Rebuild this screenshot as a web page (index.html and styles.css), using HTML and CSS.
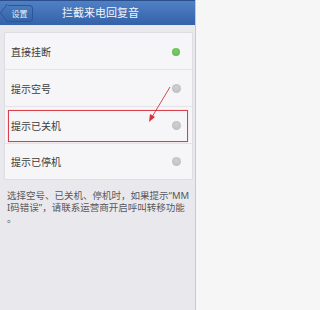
FILE: index.html
```html
<!DOCTYPE html>
<html lang="zh">
<head>
<meta charset="utf-8">
<link rel="stylesheet" href="styles.css">
</head>
<body>
<div class="frame">
  <div class="screen">
    <header class="topbar">
      <div class="back">设置</div>
      <div class="title">拦截来电回复音</div>
    </header>
    <div class="content">
      <div class="card">
        <div class="row"><span class="label">直接挂断</span><span class="dot on"></span></div>
        <div class="row"><span class="label">提示空号</span><span class="dot"></span></div>
        <div class="row marked"><span class="label">提示已关机</span><span class="dot"></span>
          <div class="mark"></div>
          <svg class="arrow" width="30" height="42" viewBox="0 0 30 42">
            <line x1="25" y1="3" x2="7" y2="33" stroke="#d8313c" stroke-width="0.9"/>
            <polygon points="4,38 5,30 10,33" fill="#d8313c"/>
          </svg>
        </div>
        <div class="row last"><span class="label">提示已停机</span><span class="dot"></span></div>
      </div>
      <p class="note">选择空号、已关机、停机时，如果提示“MMI码错误”，请联系运营商开启呼叫转移功能。</p>
    </div>
  </div>
  <div class="edge"></div>
</div>
</body>
</html>
```
FILE: styles.css
```css
html, body {
  margin: 0;
  padding: 0;
  background: #f6f6f6;
}
body {
  width: 202px;
  height: 310px;
  overflow: hidden;
  font-family: "Noto Sans CJK SC", "Noto Sans", sans-serif;
}
.frame {
  display: flex;
  height: 310px;
}
.screen {
  width: 195px;
  border-right: 1px solid #c9c9cc;
  background: #e9e9ed;
  display: flex;
  flex-direction: column;
}
.edge {
  flex: 1;
  background: #f6f6f6;
}
.topbar {
  height: 25px;
  position: relative;
  background: linear-gradient(#5080c4, #3462aa);
  border-top: 1px solid #2a4f8c;
  box-sizing: border-box;
  display: flex;
  align-items: center;
}
.back {
  position: relative;
  z-index: 0;
  margin-left: 6px;
  height: 17px;
  width: 27px;
  box-sizing: border-box;
  border: 1px solid #2c5595;
  border-left: none;
  border-radius: 0 4px 4px 0;
  background: linear-gradient(#4b7abd, #3563a8);
  color: #e6edf7;
  font-size: 8px;
  line-height: 15px;
  text-align: center;
  padding-left: 1px;
}
.back::before {
  content: "";
  position: absolute;
  left: -5px;
  top: 1.5px;
  width: 11px;
  height: 11px;
  transform: rotate(45deg) skew(8deg, 8deg);
  border-left: 1px solid #2c5595;
  border-bottom: 1px solid #2c5595;
  background: linear-gradient(135deg, #4b7abd, #3563a8);
  border-radius: 0 0 0 2px;
  z-index: -1;
}
.title {
  position: absolute;
  left: 0;
  right: 0;
  top: 0;
  bottom: 0;
  text-align: center;
  color: #f2f5fa;
  font-size: 11px;
  line-height: 23px;
  padding-left: 6px;
  pointer-events: none;
}
.content {
  padding: 7px 2px 0 4px;
}
.card {
  background: #f6f6f8;
  border: 1px solid #dedee2;
  border-radius: 2px;
}
.row {
  position: relative;
  height: 37px;
  display: flex;
  align-items: center;
  justify-content: space-between;
  padding: 1px 11px 0 6px;
  border-bottom: 1px solid #e4e4e8;
  box-sizing: border-box;
}
.row.last {
  border-bottom: none;
  height: 35px;
  padding-top: 0;
}
.label {
  font-size: 10px;
  color: #3c3c3c;
}
.dot {
  width: 9px;
  height: 9px;
  border-radius: 50%;
  background: radial-gradient(circle at 50% 40%, #d0d0d3, #b9b9be);
}
.dot.on {
  background: radial-gradient(circle at 50% 40%, #7ccc6a, #5db552);
  width: 8px;
  height: 8px;
  margin-right: 1px;
}
.mark {
  position: absolute;
  left: 3px;
  right: 4px;
  top: 3px;
  bottom: 1px;
  border: 1px solid #d8414c;
  box-shadow: 0 0 1px #f0a0a8;
}
.arrow {
  position: absolute;
  left: 140px;
  top: -23px;
}
.note {
  margin: 10px 0 0 3px;
  width: 184.5px;
  font-family: "Noto Sans", "Noto Sans CJK SC", sans-serif;
  font-size: 9.5px;
  line-height: 11.5px;
  color: #58585c;
  word-break: break-all;
  line-break: anywhere;
}
```
